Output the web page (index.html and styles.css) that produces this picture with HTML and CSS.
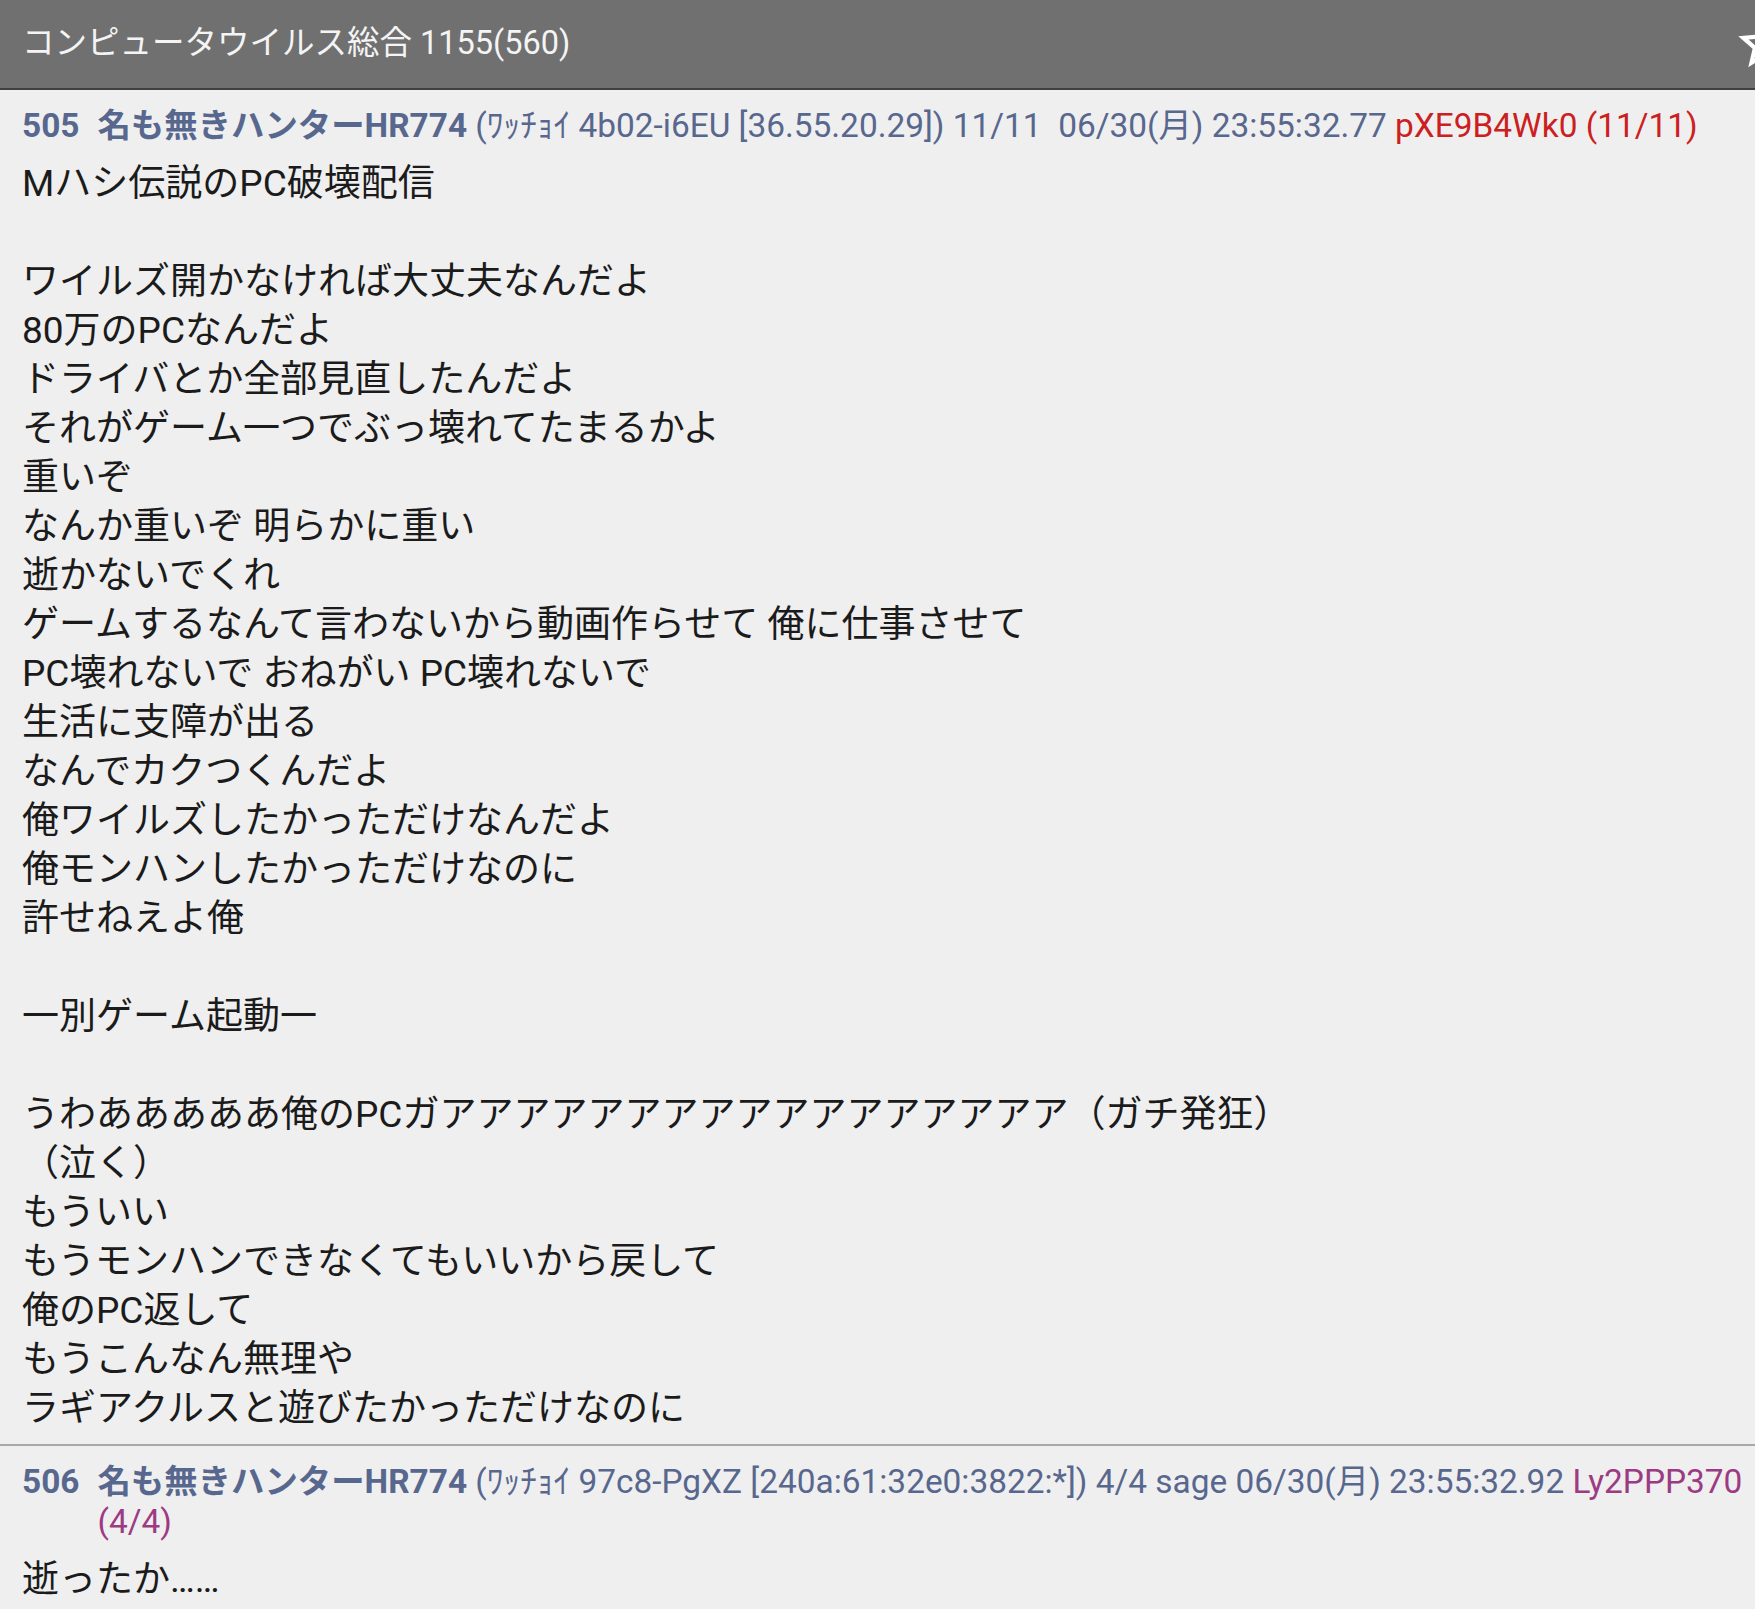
FILE: index.html
```html
<!DOCTYPE html>
<html lang="ja">
<head>
<meta charset="utf-8">
<title>コンピュータウイルス総合 1155(560)</title>
<link rel="stylesheet" href="styles.css">
</head>
<body>
<header class="appbar">
  <h1 class="title">コンピュータウイルス総合 1155(560)</h1>
  <svg class="star" viewBox="0 0 24 24" aria-hidden="true"><path d="M22 9.24l-7.19-.62L12 2 9.19 8.63 2 9.24l5.46 4.73L5.82 21 12 17.27 18.18 21l-1.63-7.03L22 9.24zM12 15.4l-3.76 2.27 1-4.28-3.32-2.88 4.38-.38L12 6.1l1.71 4.04 4.38.38-3.32 2.88 1 4.28L12 15.4z"/></svg>
</header>
<main class="thread">
  <article class="post">
    <div class="post-head">
      <span class="num">505</span>
      <span class="meta"><b class="name">名も無きハンターHR774</b> (ﾜｯﾁｮｲ 4b02-i6EU [36.55.20.29]) 11/11  06/30(月) 23:55:32.77 <span class="id id-red">pXE9B4Wk0 (11/11)</span></span>
    </div>
    <div class="post-body">Mハシ伝説のPC破壊配信<br>
<br>
ワイルズ開かなければ大丈夫なんだよ<br>
80万のPCなんだよ<br>
ドライバとか全部見直したんだよ<br>
それがゲーム一つでぶっ壊れてたまるかよ<br>
重いぞ<br>
なんか重いぞ 明らかに重い<br>
逝かないでくれ<br>
ゲームするなんて言わないから動画作らせて 俺に仕事させて<br>
PC壊れないで おねがい PC壊れないで<br>
生活に支障が出る<br>
なんでカクつくんだよ<br>
俺ワイルズしたかっただけなんだよ<br>
俺モンハンしたかっただけなのに<br>
許せねえよ俺<br>
<br>
一別ゲーム起動一<br>
<br>
うわあああああ俺のPCガアアアアアアアアアアアアアアアアア（ガチ発狂）<br>
（泣く）<br>
もういい<br>
もうモンハンできなくてもいいから戻して<br>
俺のPC返して<br>
もうこんなん無理や<br>
ラギアクルスと遊びたかっただけなのに</div>
  </article>
  <article class="post">
    <div class="post-head">
      <span class="num">506</span>
      <span class="meta"><b class="name">名も無きハンターHR774</b> (ﾜｯﾁｮｲ 97c8-PgXZ [240a:61:32e0:3822:*]) 4/4 sage 06/30(月) 23:55:32.92 <span class="id id-purple">Ly2PPP370 (4/4)</span></span>
    </div>
    <div class="post-body">逝ったか……</div>
  </article>
</main>
</body>
</html>
```

FILE: styles.css
```css
html, body {
  margin: 0;
  padding: 0;
  background: #efefef;
}
body {
  font-family: Roboto, "Noto Sans CJK JP", sans-serif;
  color: #1b1b1b;
  overflow: hidden;
}
.appbar {
  display: flex;
  align-items: center;
  height: 88px;
  background: #707070;
  border-bottom: 2px solid #404040;
  padding-left: 22px;
  overflow: hidden;
}
.title {
  flex: 1;
  margin: 0;
  margin-top: -9px;
  font-size: 32.5px;
  font-weight: 400;
  color: #f4f4f4;
  white-space: nowrap;
}
.star {
  flex: none;
  width: 63px;
  height: 63px;
  margin-right: -41px;
  margin-top: -2px;
  fill: #ffffff;
}
.post {
  padding: 16px 6px 12px 22px;
}
.post + .post {
  border-top: 2px solid #a8a8a8;
}
.post-head {
  display: flex;
  gap: 18px;
  font-size: 33.4px;
  line-height: 40px;
  color: #58678e;
}
.num {
  flex: none;
  font-weight: 700;
}
.meta {
  white-space: pre-wrap;
}
.name {
  font-weight: 700;
}
.id-red {
  color: #cc2020;
}
.id-purple {
  color: #9c3a84;
}
.post-body {
  margin-top: 13px;
  margin-bottom: -1px;
  font-size: 37px;
  line-height: 49px;
}
```
